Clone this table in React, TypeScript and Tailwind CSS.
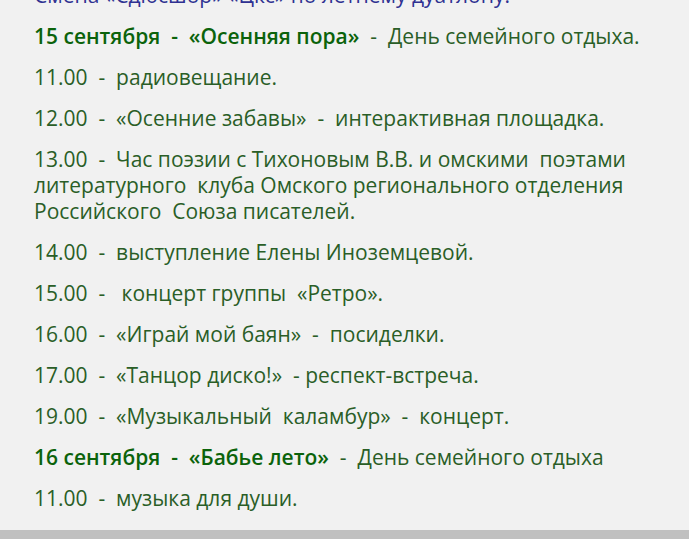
export default function App() {
  const rows = [
    '11.00  -  радиовещание.',
    '12.00  -  «Осенние забавы»  -  интерактивная площадка.',
    '13.00  -  Час поэзии с Тихоновым В.В. и омскими  поэтами литературного  клуба Омского регионального отделения Российского  Союза писателей.',
    '14.00  -  выступление Елены Иноземцевой.',
    '15.00  -   концерт группы  «Ретро».',
    '16.00  -  «Играй мой баян»  -  посиделки.',
    '17.00  -  «Танцор диско!»  - респект-встреча.',
    '19.00  -  «Музыкальный  каламбур»  -  концерт.',
  ]
  return (
    <div className="min-h-[539px] bg-[#f1f1f1] flex flex-col overflow-hidden">
      <div className="-mt-[18px] pl-[34px] pr-[40px] pb-[4px] text-[21px] leading-[26px] text-[#2a5e27] whitespace-pre-wrap [font-family:'Open_Sans',sans-serif]">
        <p className="mb-[15px] text-[#2f3192]">Смена «Сдюсшор» «Цкс» по летнему дуатлону.</p>
        <p className="mb-[15px]">
          <span className="font-semibold text-[#0b630b]">15 сентября  -  «Осенняя пора»</span>
          <span>  -  День семейного отдыха.</span>
        </p>
        {rows.map((r) => (
          <p key={r} className="mb-[15px]">{r}</p>
        ))}
        <p className="mb-[15px]">
          <span className="font-semibold text-[#0b630b]">16 сентября  -  «Бабье лето»</span>
          <span>  -  День семейного отдыха</span>
        </p>
        <p className="mb-[15px]">11.00  -  музыка для души.</p>
      </div>
      <div className="flex-1 bg-[#c0c0c0]" />
    </div>
  )
}
